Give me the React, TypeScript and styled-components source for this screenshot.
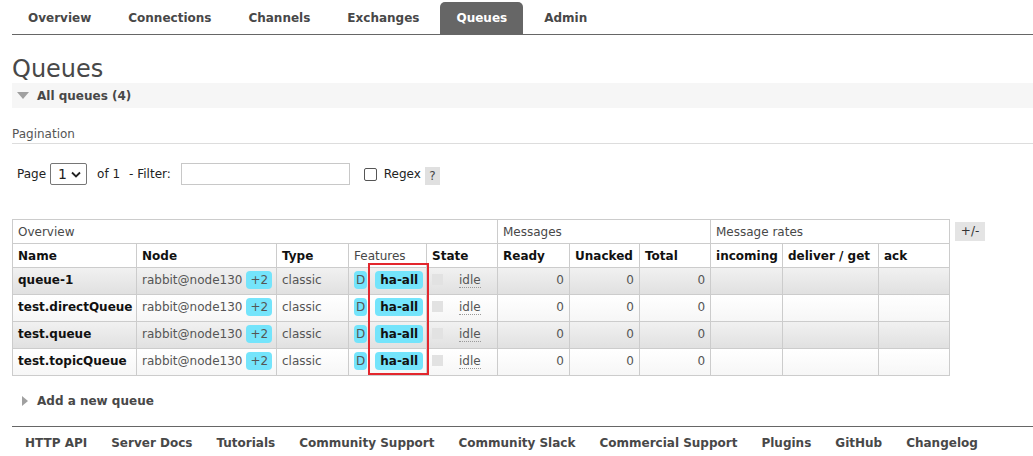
import React from 'react';
import styled, { createGlobalStyle } from 'styled-components';

const Global = createGlobalStyle`
  html, body { margin: 0; padding: 0; background: #fff; }
  body {
    font-family: "DejaVu Sans", Verdana, sans-serif;
    font-size: 12px;
    color: #484848;
  }
`;

const Page = styled.div`
  padding-left: 12px;
`;

const Nav = styled.nav`
  display: flex;
  margin-top: 2px;
  border-bottom: 1px solid #666;
`;

const Tab = styled.a<{ $active?: boolean }>`
  display: block;
  height: 32px;
  line-height: 32px;
  padding: 0 16px;
  margin-right: 5px;
  font-weight: bold;
  color: ${(p) => (p.$active ? '#fff' : '#484848')};
  background: ${(p) => (p.$active ? '#666' : 'transparent')};
  border-radius: 5px 5px 0 0;
  text-decoration: none;
`;

const Title = styled.h1`
  margin: 20px 0 0;
  font-size: 24px;
  font-weight: normal;
  line-height: 28px;
  color: #484848;
`;

const SectionBar = styled.div`
  display: flex;
  align-items: center;
  height: 25px;
  background: #f6f6f6;
  padding-left: 5px;
  font-weight: bold;
`;

const TriDown = styled.span`
  width: 0;
  height: 0;
  border-left: 6px solid transparent;
  border-right: 6px solid transparent;
  border-top: 7px solid #a0a0a0;
  margin-right: 8px;
`;

const TriRight = styled.span`
  width: 0;
  height: 0;
  border-top: 5px solid transparent;
  border-bottom: 5px solid transparent;
  border-left: 6px solid #a0a0a0;
  margin: 0 9px 0 10px;
`;

const SubHead = styled.h3`
  margin: 17px 0 0;
  font-size: 12px;
  font-weight: normal;
  line-height: 18px;
  color: #555;
  border-bottom: 1px solid #ddd;
`;

const Controls = styled.div`
  display: flex;
  align-items: center;
  height: 22px;
  margin-top: 19px;
  padding-left: 5px;
  color: #222;
`;

const Label = styled.span<{ $ml?: number }>`
  margin-left: ${(p) => p.$ml ?? 0}px;
`;

const SelectWrap = styled.span`
  position: relative;
  display: inline-block;
  margin-left: 4px;
`;

const Select = styled.select`
  appearance: none;
  width: 37px;
  height: 22px;
  border: 1px solid #767676;
  border-radius: 2px;
  background: #fff;
  font: 14px "DejaVu Sans", sans-serif;
  color: #222;
  padding: 0 0 0 7px;
`;

const Chevron = styled.svg`
  position: absolute;
  right: 6px;
  top: 8px;
  pointer-events: none;
`;

const TextInput = styled.input`
  width: 169px;
  height: 22px;
  box-sizing: border-box;
  border: 1px solid #c8c8c8;
  margin-left: 10px;
`;

const Check = styled.span`
  display: inline-block;
  width: 11px;
  height: 11px;
  border: 1px solid #555;
  border-radius: 2px;
  margin-left: 14px;
`;

const Help = styled.span`
  display: inline-block;
  width: 15px;
  height: 18px;
  line-height: 18px;
  text-align: center;
  background: #e0e0e0;
  margin-left: 4px;
  margin-top: 4px;
  color: #444;
`;

const TableRow = styled.div`
  display: flex;
  align-items: flex-start;
  margin-top: 34px;
`;

const TableWrap = styled.div`
  position: relative;
`;

const Table = styled.table`
  border-collapse: collapse;
  table-layout: fixed;
  width: 937px;
  border: 1px solid #ccc;
`;

const GroupTh = styled.th`
  height: 23px;
  padding: 0 5px;
  border: 1px solid #ccc;
  text-align: left;
  font-weight: normal;
  color: #484848;
  background: #fff;
`;

const Th = styled.th<{ $plain?: boolean }>`
  height: 23px;
  padding: 0 5px;
  border: 1px solid #ccc;
  text-align: left;
  font-weight: ${(p) => (p.$plain ? 'normal' : 'bold')};
  color: ${(p) => (p.$plain ? '#484848' : '#111')};
  background: #fff;
  white-space: nowrap;
`;

const Tr = styled.tr<{ $odd: boolean }>`
  background: ${(p) =>
    p.$odd
      ? 'linear-gradient(#f1f1f1, #e0e0e0)'
      : 'linear-gradient(#ffffff, #f6f6f6)'};
`;

const Td = styled.td<{ $num?: boolean; $bold?: boolean }>`
  height: 27px;
  box-sizing: border-box;
  padding: 3px 5px 0;
  vertical-align: top;
  border: 1px solid #ccc;
  text-align: ${(p) => (p.$num ? 'right' : 'left')};
  font-weight: ${(p) => (p.$bold ? 'bold' : 'normal')};
  color: ${(p) => (p.$bold ? '#111' : '#555')};
  white-space: nowrap;
  line-height: 18px;
`;

const Badge = styled.span<{ $bold?: boolean; $pad?: number; $ml?: number }>`
  display: inline-block;
  background: #74e4fb;
  border-radius: 4px;
  line-height: 18px;
  padding: 0 ${(p) => p.$pad ?? 4}px;
  margin-left: ${(p) => p.$ml ?? 0}px;
  font-weight: ${(p) => (p.$bold ? 'bold' : 'normal')};
  color: ${(p) => (p.$bold ? '#111' : '#555')};
`;

const StateBox = styled.span`
  display: inline-block;
  width: 11px;
  height: 11px;
  background: #e2e2e2;
  vertical-align: top;
  margin-top: 3px;
`;

const Idle = styled.abbr`
  text-decoration: none;
  border-bottom: 1px dotted #999;
  margin-left: 16px;
  color: #555;
`;

const Highlight = styled.div`
  position: absolute;
  left: 356px;
  top: 44px;
  width: 61px;
  height: 112px;
  box-sizing: border-box;
  border: 2px solid #e3262d;
  pointer-events: none;
`;

const Toggle = styled.span`
  display: inline-block;
  width: 30px;
  height: 19px;
  line-height: 19px;
  text-align: center;
  background: #e4e4e4;
  color: #333;
  margin: 3px 0 0 5px;
`;

const AddRow = styled.div`
  display: flex;
  align-items: center;
  height: 20px;
  margin-top: 15px;
  font-weight: bold;
`;

const Footer = styled.footer`
  display: flex;
  gap: 24px;
  margin-top: 15px;
  border-top: 1px solid #666;
  padding: 6px 0 0 13px;
  line-height: 20px;
  font-weight: bold;
`;

const FootLink = styled.a`
  color: #484848;
  text-decoration: none;
`;

const tabs = ['Overview', 'Connections', 'Channels', 'Exchanges', 'Queues', 'Admin'];
const queues = ['queue-1', 'test.directQueue', 'test.queue', 'test.topicQueue'];
const widths = [124, 140, 72, 78, 71, 72, 70, 71, 72, 96, 71];
const footer = [
  'HTTP API',
  'Server Docs',
  'Tutorials',
  'Community Support',
  'Community Slack',
  'Commercial Support',
  'Plugins',
  'GitHub',
  'Changelog',
];

export default function App() {
  return (
    <Page>
      <Global />
      <Nav>
        {tabs.map((t) => (
          <Tab key={t} $active={t === 'Queues'}>
            {t}
          </Tab>
        ))}
      </Nav>
      <Title>Queues</Title>
      <SectionBar>
        <TriDown />
        All queues (4)
      </SectionBar>
      <SubHead>Pagination</SubHead>
      <Controls>
        <Label>Page</Label>
        <SelectWrap>
          <Select defaultValue="1">
            <option value="1">1</option>
          </Select>
          <Chevron width="10" height="7" viewBox="0 0 10 7">
            <path d="M1 1.5 L5 5.5 L9 1.5" fill="none" stroke="#222" strokeWidth="1.8" />
          </Chevron>
        </SelectWrap>
        <Label $ml={10}>of 1</Label>
        <Label $ml={9}>- Filter:</Label>
        <TextInput type="text" />
        <Check />
        <Label $ml={7}>Regex</Label>
        <Help>?</Help>
      </Controls>
      <TableRow>
        <TableWrap>
          <Table>
            <colgroup>
              {widths.map((w, i) => (
                <col key={i} style={{ width: w }} />
              ))}
            </colgroup>
            <thead>
              <tr>
                <GroupTh colSpan={5}>Overview</GroupTh>
                <GroupTh colSpan={3}>Messages</GroupTh>
                <GroupTh colSpan={3}>Message rates</GroupTh>
              </tr>
              <tr>
                <Th>Name</Th>
                <Th>Node</Th>
                <Th>Type</Th>
                <Th $plain>Features</Th>
                <Th>State</Th>
                <Th>Ready</Th>
                <Th>Unacked</Th>
                <Th>Total</Th>
                <Th>incoming</Th>
                <Th>deliver / get</Th>
                <Th>ack</Th>
              </tr>
            </thead>
            <tbody>
              {queues.map((q, i) => (
                <Tr key={q} $odd={i % 2 === 0}>
                  <Td $bold>{q}</Td>
                  <Td>
                    rabbit@node130
                    <Badge $ml={4}>+2</Badge>
                  </Td>
                  <Td>classic</Td>
                  <Td>
                    <Badge $pad={2}>D</Badge>
                    <Badge $bold $pad={5} $ml={8}>
                      ha-all
                    </Badge>
                  </Td>
                  <Td>
                    <StateBox />
                    <Idle title="idle">idle</Idle>
                  </Td>
                  <Td $num>0</Td>
                  <Td $num>0</Td>
                  <Td $num>0</Td>
                  <Td />
                  <Td />
                  <Td />
                </Tr>
              ))}
            </tbody>
          </Table>
          <Highlight />
        </TableWrap>
        <Toggle>+/-</Toggle>
      </TableRow>
      <AddRow>
        <TriRight />
        Add a new queue
      </AddRow>
      <Footer>
        {footer.map((f) => (
          <FootLink key={f}>{f}</FootLink>
        ))}
      </Footer>
    </Page>
  );
}
